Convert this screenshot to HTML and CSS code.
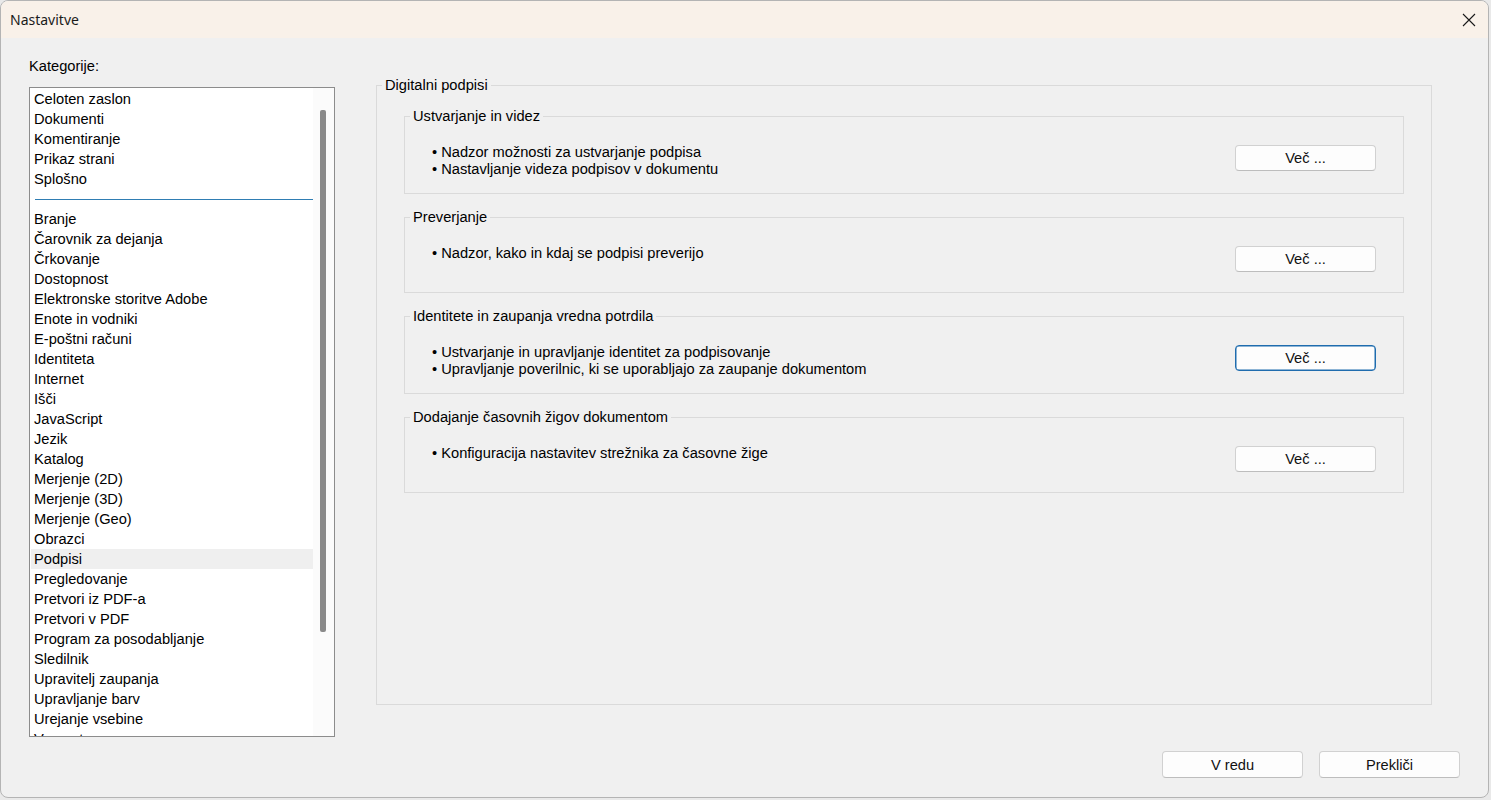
FILE: index.html
```html
<!DOCTYPE html>
<html lang="sl">
<head>
<meta charset="utf-8">
<title>Nastavitve</title>
<link rel="stylesheet" href="styles.css">
</head>
<body>
<div class="window">
  <div class="titlebar">
    <span class="title">Nastavitve</span>
    <span class="close" aria-label="Zapri">
      <svg width="14" height="14" viewBox="0 0 14 14"><path d="M1 1 L13 13 M13 1 L1 13" stroke="#1a1a1a" stroke-width="1.1" fill="none"/></svg>
    </span>
  </div>
  <div class="main">
    <div class="left">
      <div class="cat-label">Kategorije:</div>
      <div class="list">
        <div class="items">
          <div class="item">Celoten zaslon</div>
          <div class="item">Dokumenti</div>
          <div class="item">Komentiranje</div>
          <div class="item">Prikaz strani</div>
          <div class="item">Splošno</div>
          <div class="sep"><div class="sep-line"></div></div>
          <div class="item">Branje</div>
          <div class="item">Čarovnik za dejanja</div>
          <div class="item">Črkovanje</div>
          <div class="item">Dostopnost</div>
          <div class="item">Elektronske storitve Adobe</div>
          <div class="item">Enote in vodniki</div>
          <div class="item">E-poštni računi</div>
          <div class="item">Identiteta</div>
          <div class="item">Internet</div>
          <div class="item">Išči</div>
          <div class="item">JavaScript</div>
          <div class="item">Jezik</div>
          <div class="item">Katalog</div>
          <div class="item">Merjenje (2D)</div>
          <div class="item">Merjenje (3D)</div>
          <div class="item">Merjenje (Geo)</div>
          <div class="item">Obrazci</div>
          <div class="item selected">Podpisi</div>
          <div class="item">Pregledovanje</div>
          <div class="item">Pretvori iz PDF-a</div>
          <div class="item">Pretvori v PDF</div>
          <div class="item">Program za posodabljanje</div>
          <div class="item">Sledilnik</div>
          <div class="item">Upravitelj zaupanja</div>
          <div class="item">Upravljanje barv</div>
          <div class="item">Urejanje vsebine</div>
          <div class="item">Varnost</div>
        </div>
        <div class="scrolltrack"><div class="thumb"></div></div>
      </div>
    </div>
    <div class="right">
      <fieldset class="outer">
        <legend>Digitalni podpisi</legend>
        <div class="outer-body">
          <fieldset class="group">
            <legend>Ustvarjanje in videz</legend>
            <div class="group-body">
              <div class="bullets">
                <div>• Nadzor možnosti za ustvarjanje podpisa</div>
                <div>• Nastavljanje videza podpisov v dokumentu</div>
              </div>
              <button class="btn more">Več ...</button>
            </div>
          </fieldset>
          <fieldset class="group">
            <legend>Preverjanje</legend>
            <div class="group-body">
              <div class="bullets">
                <div>• Nadzor, kako in kdaj se podpisi preverijo</div>
              </div>
              <button class="btn more">Več ...</button>
            </div>
          </fieldset>
          <fieldset class="group">
            <legend>Identitete in zaupanja vredna potrdila</legend>
            <div class="group-body">
              <div class="bullets">
                <div>• Ustvarjanje in upravljanje identitet za podpisovanje</div>
                <div>• Upravljanje poverilnic, ki se uporabljajo za zaupanje dokumentom</div>
              </div>
              <button class="btn more focused">Več ...</button>
            </div>
          </fieldset>
          <fieldset class="group">
            <legend>Dodajanje časovnih žigov dokumentom</legend>
            <div class="group-body">
              <div class="bullets">
                <div>• Konfiguracija nastavitev strežnika za časovne žige</div>
              </div>
              <button class="btn more">Več ...</button>
            </div>
          </fieldset>
        </div>
      </fieldset>
    </div>
  </div>
  <div class="footer">
    <button class="btn dlg">V redu</button>
    <button class="btn dlg">Prekliči</button>
  </div>
</div>
</body>
</html>
```

FILE: styles.css
```css
* { box-sizing: border-box; }

html, body {
  margin: 0;
  padding: 0;
  background: #e9e9e9;
  overflow: hidden;
}

body {
  font-family: "Liberation Sans", Arial, sans-serif;
  font-size: 14.67px;
  color: #000;
}

.window {
  width: 1489px;
  height: 798px;
  background: #f0f0f0;
  border: 1px solid #b4b4b4;
  border-radius: 8px;
  overflow: hidden;
  display: flex;
  flex-direction: column;
}

.titlebar {
  height: 37px;
  flex: none;
  background: #f9f1e9;
  display: flex;
  align-items: center;
  justify-content: space-between;
  padding: 0 12px 0 9px;
}

.title {
  font-family: "Noto Sans", "Open Sans", sans-serif;
  font-size: 14px;
  line-height: 18px;
  color: #1b1b1b;
  margin-top: 1px;
}

.close {
  display: flex;
  width: 14px;
  height: 14px;
}

.main {
  display: flex;
  padding: 18px 0 0 28px;
  gap: 41px;
  flex: none;
}

.left {
  width: 306px;
  flex: none;
}

.cat-label {
  line-height: 20px;
  margin-bottom: 11px;
}

.list {
  height: 650px;
  background: #fff;
  border: 1px solid #8c8c8c;
  display: flex;
}

.items {
  flex: 1;
  overflow: hidden;
  padding: 1px 0 0 1px;
}

.item {
  height: 20px;
  line-height: 20px;
  padding-left: 3px;
  white-space: nowrap;
}

.item.selected {
  background: #efefef;
}

.sep {
  height: 20px;
  padding: 10px 0 0 4px;
}

.sep-line {
  height: 1px;
  background: #2f7db3;
}

.scrolltrack {
  width: 21px;
  flex: none;
  background: #fbfbfb;
  padding: 22px 0 0 7px;
}

.thumb {
  width: 6px;
  height: 522px;
  background: #8a8a8a;
  border-radius: 2px;
}

.right {
  width: 1056px;
  flex: none;
  padding-top: 20px;
}

fieldset {
  margin: 0;
  padding: 0;
  border: 1px solid #dadada;
  min-width: 0;
}

legend {
  padding: 0 3px;
  margin-left: 5px;
  line-height: 18px;
  font-size: 14.67px;
}

.outer {
  height: 629px;
}

.outer-body {
  padding: 13px 27px 0;
  display: flex;
  flex-direction: column;
  gap: 14px;
}

.group-body {
  display: flex;
  justify-content: space-between;
  align-items: flex-start;
  padding: 19px 27px 15px;
}

.bullets {
  line-height: 17px;
}

.btn {
  font-family: "Liberation Sans", Arial, sans-serif;
  font-size: 14.67px;
  color: #111;
  background: #fdfdfd;
  border: 1px solid #d1d1d1;
  border-bottom-color: #bdbdbd;
  border-radius: 4px;
  padding: 0;
  margin: 0;
}

.btn.more {
  width: 141px;
  height: 26px;
  margin: 1px 0 5px;
}

.btn.focused {
  border: 1px solid #1f6cae;
  box-shadow: inset 0 0 0 0.5px #1f6cae;
}

.footer {
  display: flex;
  justify-content: flex-end;
  gap: 16px;
  padding: 0 28px 0 0;
  margin-top: 14px;
}

.btn.dlg {
  width: 141px;
  height: 27px;
}
```
